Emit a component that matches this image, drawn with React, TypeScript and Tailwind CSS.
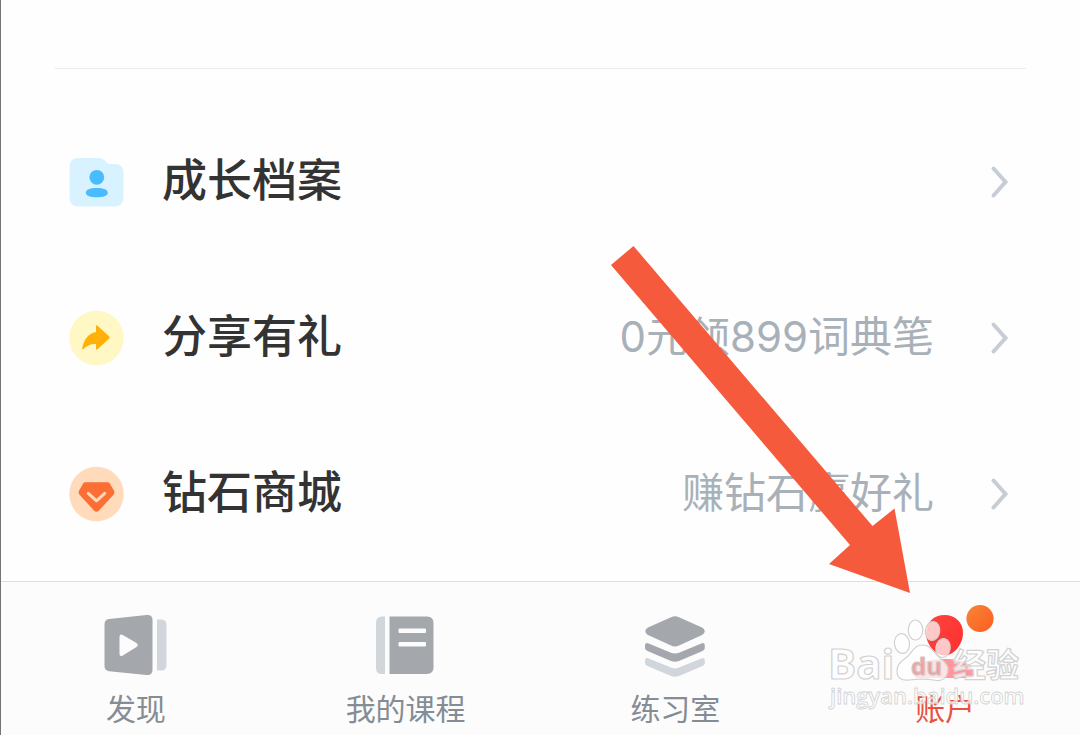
import type { ReactNode } from "react";

type MenuRow = { title: string; note?: string; icon: ReactNode };
type Tab = { label: string; icon: ReactNode; active?: boolean };

function FolderIcon() {
  return (
    <svg viewBox="0 0 56 56" className="size-14 shrink-0" aria-hidden="true">
      <path
        d="M10.500 4H31.500C34.500 4 35.500 5.500 37.500 7.500C39.500 9.500 40.500 10 43.500 10H46.500Q55.500 10 55.500 19V43Q55.500 52.500 46.500 52.500H10.500Q1.500 52.500 1.500 43V13Q1.500 4 10.500 4Z"
        fill="#d9f2ff"
      />
      <circle cx="28.800" cy="23.300" r="7.400" fill="#48bcff" />
      <path
        d="M17.800 38.800C17.800 35.500 22 34 28.800 34S39.800 35.500 39.800 38.800S35 43.300 28.800 43.300S17.800 42 17.800 38.800Z"
        fill="#48bcff"
      />
    </svg>
  );
}

function ShareIcon() {
  return (
    <svg viewBox="0 0 56 56" className="size-14 shrink-0" aria-hidden="true">
      <circle cx="28.500" cy="28" r="27.200" fill="#fff7c4" />
      <path
        d="M28 16.200Q28 14.500 29.500 15.700L41 26.300Q42.300 27.500 41 28.700L29.500 39.300Q28 40.500 28 38.800V34C22 34 18.500 36 15.500 39.200Q14 39.800 14.300 38C16 29.500 20 23.500 28 22Z"
        fill="#ffb10a"
      />
    </svg>
  );
}

function DiamondIcon() {
  return (
    <svg viewBox="0 0 56 56" className="size-14 shrink-0" aria-hidden="true">
      <circle cx="28.500" cy="28" r="27.200" fill="#ffdabb" />
      <path
        d="M17.500 16.200H39.500Q41 16.200 41.800 17.400L45.900 24.500Q47.100 27 45.300 29L30.800 44.700Q28.500 47 26.200 44.700L11.700 29Q9.900 27 11.100 24.500L15.200 17.400Q16 16.200 17.500 16.200Z"
        fill="#fb6e34"
      />
      <path
        d="M20.300 27.300L28.500 34.800L36.700 27.300"
        fill="none"
        stroke="#ffdabb"
        strokeWidth="3"
        strokeLinecap="round"
        strokeLinejoin="round"
      />
    </svg>
  );
}

function Chevron() {
  return (
    <svg viewBox="0 0 20 34" className="h-[34px] w-5 shrink-0" aria-hidden="true">
      <path
        d="M3.500 3.500L15.500 17L3.500 30.500"
        fill="none"
        stroke="#c6cdd4"
        strokeWidth="4"
        strokeLinecap="round"
        strokeLinejoin="miter"
      />
    </svg>
  );
}

function DiscoverIcon() {
  return (
    <svg viewBox="1 0 64 64" className="size-16" aria-hidden="true">
      <path
        d="M6 6L43.500 2.100Q49.500 1.600 49.500 7V57Q49.500 62.500 43.500 62L6 58.200Q1.500 57.500 1.500 53V11.500Q1.500 6.500 6 6Z"
        fill="#a4a7ac"
      />
      <path
        d="M16.500 24Q16.500 20.500 19.800 22L33.500 30Q36 32 33.500 34L19.800 42.500Q16.500 44 16.500 41Z"
        fill="#fcfcfc"
      />
      <path d="M54 6.500H58Q63.500 6.500 63.500 12V52Q63.500 57.500 58 57.500H54Z" fill="#d1d5dc" />
    </svg>
  );
}

function CourseIcon() {
  return (
    <svg viewBox="1 0 64 64" className="size-16" aria-hidden="true">
      <path d="M12 3.500V61H9Q3 61 3 55V9.500Q3 3.500 9 3.500Z" fill="#d1d6db" />
      <path d="M16.500 3.500H54Q60.500 3.500 60.500 10V54.500Q60.500 61 54 61H16.500Z" fill="#a4a7ac" />
      <rect x="25.500" y="15.500" width="27.500" height="4.500" rx="1" fill="#fcfcfc" />
      <rect x="25.500" y="29" width="27.500" height="4.500" rx="1" fill="#fcfcfc" />
    </svg>
  );
}

function PracticeIcon() {
  return (
    <svg viewBox="0 0 64 64" className="size-16" aria-hidden="true">
      <path
        d="M28 4.200Q32 2.400 36 4.200L59 14.500Q64.500 18.200 59 22L36 32.600Q32 34.400 28 32.600L5 22Q-.5 18.200 5 14.500Z"
        fill="#a4a7ac"
      />
      <path
        d="M5 30.200L28 39.800Q32 41.300 36 39.800L59 30.200Q61.800 29.600 61.800 33V35Q61.800 37 59.500 38L36 48Q32 49.600 28 48L4.500 38Q2 37 2 35V33Q2 29.600 5 30.200Z"
        fill="#a4a7ac"
      />
      <path
        d="M5 45.200L28 54.600Q32 56.200 36 54.600L59 45.200Q61.800 44.600 61.800 48V50Q61.800 52 59.500 53L36 63Q32 64.600 28 63L4.500 53Q2 52 2 50V48Q2 44.600 5 45.200Z"
        fill="#d1d5dc"
      />
    </svg>
  );
}

function AccountIcon() {
  return (
    <svg viewBox="0 0 64 64" className="size-16 overflow-visible" aria-hidden="true">
      <defs>
        <linearGradient id="head" x1="0" y1="0" x2="1" y2="1">
          <stop offset="0" stopColor="#ff453d" />
          <stop offset="1" stopColor="#fb2f2f" />
        </linearGradient>
        <linearGradient id="dot" x1="0" y1="0" x2="1" y2="1">
          <stop offset="0" stopColor="#f98637" />
          <stop offset="1" stopColor="#fc5c20" />
        </linearGradient>
      </defs>
      <path
        d="M31.500 2C42 2 50 9 50 20C50 31 41 42.500 31.500 42.500S13 31 13 20C13 9 21 2 31.500 2Z"
        fill="url(#head)"
      />
      <path d="M1 61C2 51 13 46 32 46S60 51 61 61Q61 65 56 65H6Q1 65 1 61Z" fill="#ff969c" />
      <circle cx="67" cy="5.500" r="13.600" fill="url(#dot)" />
    </svg>
  );
}

function Watermark() {
  return (
    <svg
      viewBox="0 0 210 115"
      className="pointer-events-none absolute bottom-[14px] left-[13px] h-[115px] w-[210px]"
      aria-hidden="true"
    >
      <g
        fill="#ffffff"
        fillOpacity="0.72"
        stroke="#d2d2d2"
        strokeWidth="1.200"
        strokeLinejoin="round"
      >
        <g fontFamily="'Open Sans', sans-serif">
          <text x="5" y="79" fontSize="42" fontWeight="700">Bai</text>
          <text x="7" y="104" fontSize="22" fontWeight="600" strokeWidth="0.800">
            jingyan.baidu.com
          </text>
        </g>
        <ellipse cx="79" cy="43.500" rx="7.500" ry="10" transform="rotate(-8 79 43.500)" />
        <ellipse cx="92.500" cy="30" rx="7.200" ry="10" />
        <ellipse cx="109.500" cy="31" rx="7.200" ry="9.500" transform="rotate(8 109.500 31)" />
        <ellipse cx="120" cy="48" rx="7.200" ry="9.500" transform="rotate(8 120 48)" />
        <path d="M99 45C91 45 89 53 84 57C77 62 74 65 74 71C74 78 79 81 86 80C94 79 104 79 111 80C119 82 125 78 125 69C125 62 117 60 112 53C108 48 106 45 99 45Z" />
        <text
          x="88"
          y="75"
          fontFamily="'Open Sans', sans-serif"
          fontSize="24"
          fontWeight="700"
          fill="#e6857f"
          stroke="#d8c3c3"
        >
          du
        </text>
        <text
          x="130"
          y="77"
          fontFamily="'Noto Sans CJK SC', sans-serif"
          fontSize="33"
          fontWeight="700"
        >
          经验
        </text>
      </g>
    </svg>
  );
}

function PointerArrow() {
  return (
    <svg
      viewBox="0 0 300 348"
      className="pointer-events-none absolute right-[170px] bottom-[142px] h-[348px] w-[300px]"
      aria-hidden="true"
    >
      <path d="M1 20L23.500 1L262.500 281L284.500 263.500L300 348L219 319L240 300Z" fill="#f55a3d" />
    </svg>
  );
}

const rows: MenuRow[] = [
  { title: "成长档案", icon: <FolderIcon /> },
  { title: "分享有礼", note: "0元领899词典笔", icon: <ShareIcon /> },
  { title: "钻石商城", note: "赚钻石赢好礼", icon: <DiamondIcon /> },
];

const tabs: Tab[] = [
  { label: "发现", icon: <DiscoverIcon /> },
  { label: "我的课程", icon: <CourseIcon /> },
  { label: "练习室", icon: <PracticeIcon /> },
  { label: "账户", icon: <AccountIcon />, active: true },
];

export default function App() {
  return (
    <div className="relative flex min-h-screen flex-col overflow-hidden border-l border-[#747474] bg-[#fefefe] font-['Inter','Noto_Sans_CJK_SC',sans-serif]">
      <main className="grow pt-[68px]">
        <hr className="mx-[54px] border-[#ececec]" />
        <ul className="pt-[35px]">
          {rows.map((row) => (
            <li key={row.title}>
              <a href="#" className="flex h-[156px] items-center pr-[70px] pl-[67px]">
                {row.icon}
                <span className="ml-[38px] grow pb-0.5 text-[45px] leading-[60px] font-medium text-[#333333]">
                  {row.title}
                </span>
                {row.note && (
                  <span className="mr-14 pb-0.5 text-[42px] leading-[60px] font-normal text-[#a9b1b8]">
                    {row.note}
                  </span>
                )}
                <Chevron />
              </a>
            </li>
          ))}
        </ul>
      </main>
      <nav className="grid grid-cols-4 border-t border-[#dedede] bg-[#fcfcfc] pt-[31px] pb-[6px]">
        {tabs.map((tab) => (
          <a
            key={tab.label}
            href="#"
            aria-current={tab.active ? "page" : undefined}
            className="relative flex flex-col items-center gap-3"
          >
            {tab.icon}
            <span
              className={
                tab.active
                  ? "text-[30px] leading-10 text-[#e8513f]"
                  : "text-[30px] leading-10 text-[#858c93]"
              }
            >
              {tab.label}
            </span>
            {tab.active && <Watermark />}
          </a>
        ))}
      </nav>
      <PointerArrow />
    </div>
  );
}
